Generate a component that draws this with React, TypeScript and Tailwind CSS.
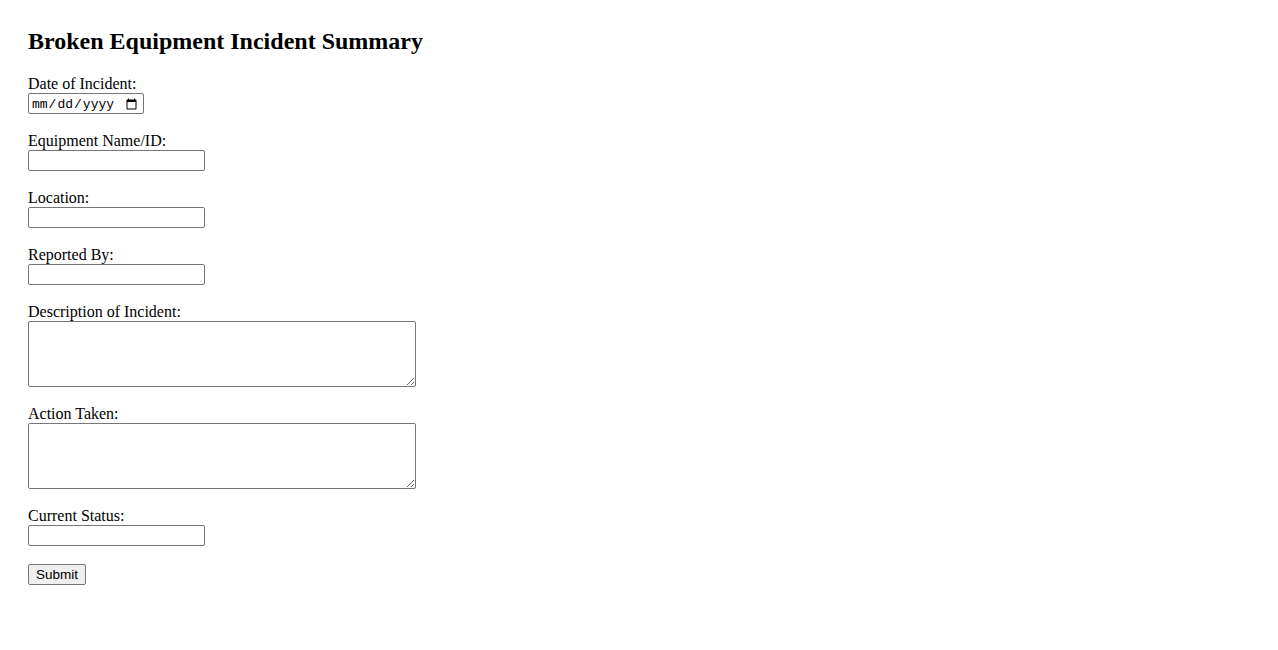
import React from 'react';

const inputCls = 'block w-[177px] h-[21px] border border-[#767676] rounded-[2px] bg-white px-[2px] py-[1px] text-[13.33px] font-["Liberation_Sans",Arial,sans-serif]';
const areaCls = 'block w-[388px] h-[66px] border border-[#767676] rounded-[2px] bg-white px-[2px] py-[2px] text-[13.33px] font-["Liberation_Mono",monospace] resize';

function Field({ label, children }: { label: string; children: React.ReactNode }) {
  return <div className="mb-[17.5px]">
      <label className="block leading-[18.5px]">{label}</label>
      {children}
    </div>;
}

export default function App() {
  return <div className="min-h-[650px] bg-white pt-[28px] pl-[28px] text-[16px] text-black font-['Liberation_Serif','Times_New_Roman',serif]">
      <h2 className="text-[24px] font-bold leading-[27.6px] mb-[19px]">
        Broken Equipment Incident Summary
      </h2>
      <form onSubmit={e => e.preventDefault()}>
        <Field label="Date of Incident:">
          <input type="date" className="block w-[116px] h-[21px] border border-[#767676] rounded-[2px] bg-white pl-[2px] pr-[3px] pt-[2px] pb-0 text-[13px] font-['Liberation_Mono',monospace]" />
        </Field>
        <Field label="Equipment Name/ID:">
          <input type="text" className={inputCls} />
        </Field>
        <Field label="Location:">
          <input type="text" className={inputCls} />
        </Field>
        <Field label="Reported By:">
          <input type="text" className={inputCls} />
        </Field>
        <Field label="Description of Incident:">
          <textarea className={areaCls} />
        </Field>
        <Field label="Action Taken:">
          <textarea className={areaCls} />
        </Field>
        <Field label="Current Status:">
          <input type="text" className={inputCls} />
        </Field>
        <button type="submit" className="block w-[58px] h-[21px] border border-[#767676] rounded-[2px] bg-[#efefef] px-0 pt-[1px] pb-0 text-[13.5px] leading-[17px] font-['Liberation_Sans',Arial,sans-serif]">
          Submit
        </button>
      </form>
    </div>;
}
